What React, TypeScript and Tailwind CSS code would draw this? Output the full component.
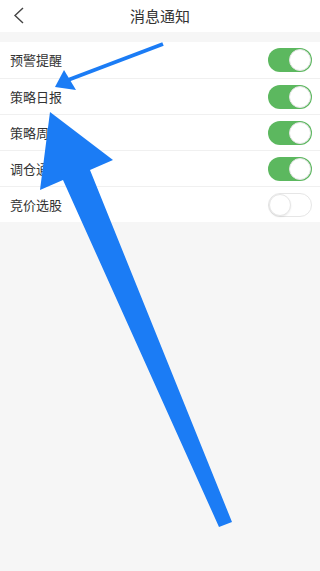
import React from "react";

type Item = { label: string; on: boolean };

const items: Item[] = [
  { label: "预警提醒", on: true },
  { label: "策略日报", on: true },
  { label: "策略周报", on: true },
  { label: "调仓通知", on: true },
  { label: "竞价选股", on: false },
];

const Toggle: React.FC<{ on: boolean }> = ({ on }) => (
  <div
    className={
      on
        ? "w-[44px] h-[24px] rounded-full bg-[#5cb85f] flex items-center justify-end p-[1px]"
        : "w-[44px] h-[24px] rounded-full bg-white border border-[#e6e6e6] flex items-center justify-start"
    }
  >
    <div
      className={
        on
          ? "w-[22px] h-[22px] rounded-full bg-white border border-[#e3e3e3]"
          : "w-[22px] h-[22px] rounded-full bg-white border border-[#e6e6e6] shadow-[0_1px_2px_rgba(0,0,0,0.08)]"
      }
    />
  </div>
);

const App: React.FC = () => {
  return (
    <div
      className="relative h-[571px] w-full bg-[#f6f6f6] overflow-hidden"
      style={{ fontFamily: '"Noto Sans CJK SC", "Noto Sans", sans-serif' }}
    >
      <div className="h-[32px] bg-white flex items-center relative">
        <svg
          className="absolute left-[13px] top-[7px]"
          width="12"
          height="17"
          viewBox="0 0 12 17"
        >
          <path d="M10 1 L2 8.5 L10 16" fill="none" stroke="#444" strokeWidth="1.4" />
        </svg>
        <div className="w-full text-center text-[15px] text-[#333]">消息通知</div>
      </div>
      <div className="h-[10px]" />
      <div className="bg-white">
        {items.map((it, i) => (
          <div
            key={it.label}
            className={
              i === 0
                ? "h-[36px] flex items-center justify-between pl-[10px] pr-[8px]"
                : "h-[36px] flex items-center justify-between pl-[10px] pr-[8px] border-t border-[#f0f0f0]"
            }
          >
            <span className="text-[13px] text-[#333]">{it.label}</span>
            <Toggle on={it.on} />
          </div>
        ))}
      </div>

      {/* annotation arrows */}
      <svg className="absolute inset-0" width="320" height="571" viewBox="0 0 320 571">
        <line x1="163" y1="44" x2="68" y2="80" stroke="#1b7cf5" strokeWidth="4" />
        <polygon points="55,87 64,70 76,90" fill="#1b7cf5" />
        <polygon
          points="50,112 113,160 90,170 232,522 219,527 63,180 40,190"
          fill="#1b7cf5"
        />
      </svg>
    </div>
  );
};

export default App;
